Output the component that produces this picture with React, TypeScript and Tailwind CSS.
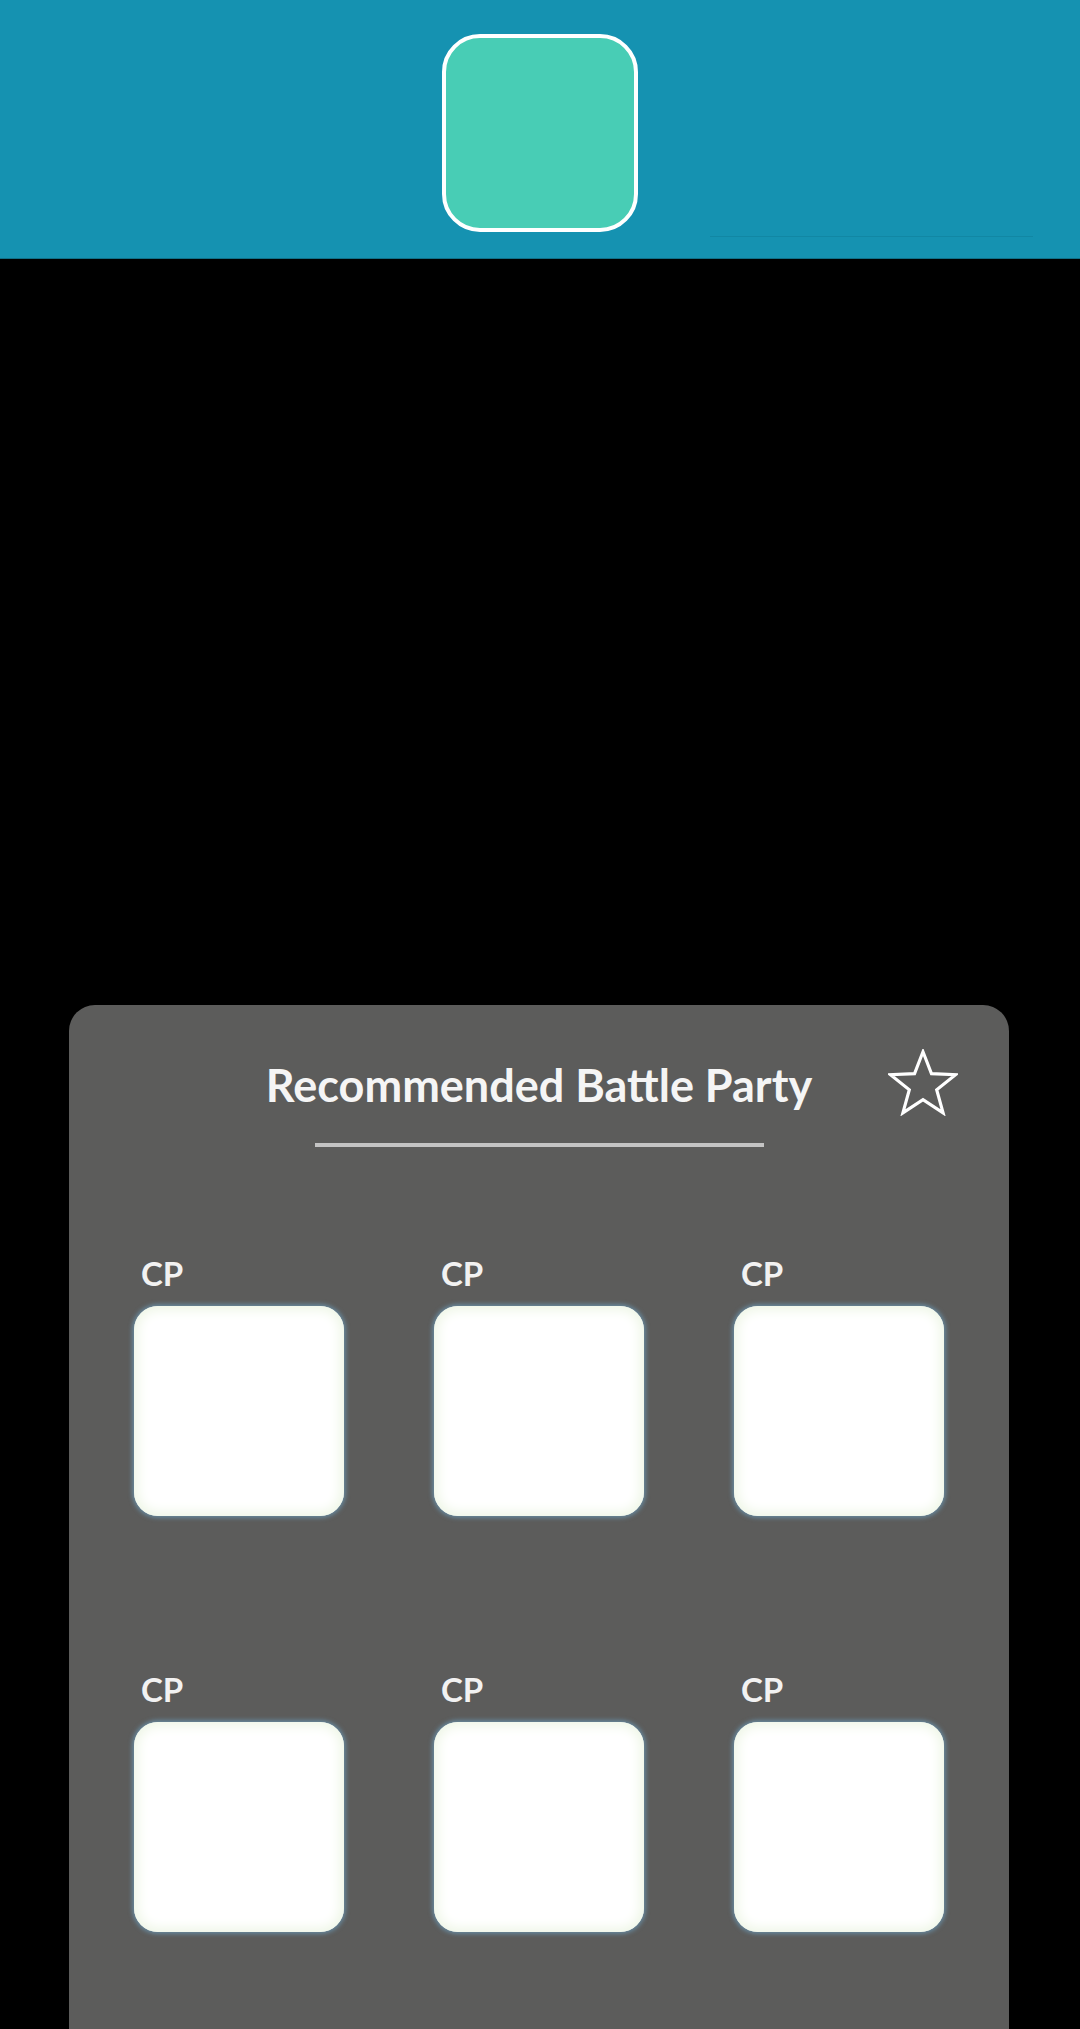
const slots = [0, 1, 2, 3, 4, 5];

function StarOutline() {
  return (
    <svg width="70" height="67" viewBox="0 0 100 96" fill="none">
      <polygon
        points="50,4 62.1,35.3 96.6,36.9 69.6,58.4 78.8,91.6 50,72.6 21.2,91.6 30.4,58.4 3.4,36.9 37.9,35.3"
        stroke="#ffffff"
        strokeWidth="4.5"
        strokeLinejoin="miter"
      />
    </svg>
  );
}

function PartySlot() {
  return (
    <div className="flex flex-col">
      <span className="pl-[7px] text-[33px] leading-[40px] font-bold text-[#f2f2f2]">
        CP
      </span>
      <div className="mt-[13px] h-[210px] w-[210px] rounded-[24px] bg-white shadow-[0_0_4px_2px_rgba(110,165,200,0.6),inset_0_0_12px_4px_#eef6e6]" />
    </div>
  );
}

export default function App() {
  return (
    <div
      className="flex min-h-[2029px] flex-col bg-black"
      style={{ fontFamily: "Lato, 'Noto Sans', sans-serif" }}
    >
      {/* top bar */}
      <div className="flex h-[259px] flex-col border-b border-[#0f6f88] bg-[#1592b1] pt-[34px]">
        <div className="mx-auto h-[198px] w-[196px] rounded-[38px] border-[4px] border-white bg-[#48cdb5]" />
        <div className="mt-[4px] ml-[710px] h-px w-[323px] bg-[#1187a4]" />
      </div>

      {/* battle party panel */}
      <div className="mt-[746px] ml-[69px] flex w-[940px] flex-1 flex-col rounded-t-[26px] bg-[#5c5c5b] pt-[44px] pb-[80px]">
        <div className="grid grid-cols-[1fr_auto_1fr] items-start px-[51px]">
          <div />
          <h1 className="mt-[11px] text-[45px] leading-[50px] font-bold text-[#f5f5f5]">
            Recommended Battle Party
          </h1>
          <div className="flex justify-end">
            <StarOutline />
          </div>
        </div>
        <div className="mx-auto mt-[27px] h-[4px] w-[449px] bg-[#c4c4c4]" />

        <div className="mt-[106px] grid grid-cols-[210px_210px_210px] gap-x-[90px] gap-y-[153px] pr-[65px] pl-[65px]">
          {slots.map((s) => (
            <PartySlot key={s} />
          ))}
        </div>
      </div>
    </div>
  );
}
